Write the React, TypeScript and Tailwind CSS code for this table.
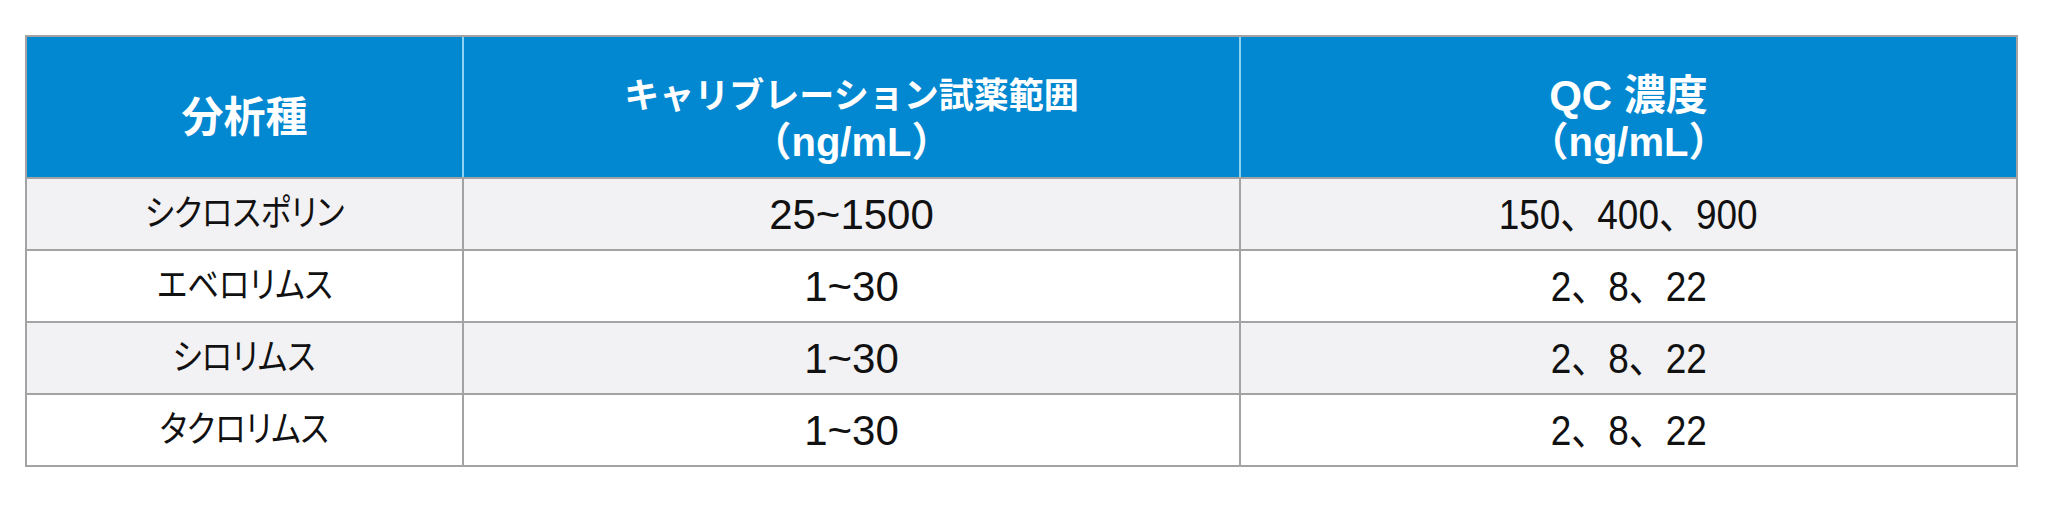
import React from 'react'

type Row = {
  name: string
  range: string
  qc: string
}

const rows: Row[] = [
  { name: 'シクロスポリン', range: '25~1500', qc: '150、400、900' },
  { name: 'エベロリムス', range: '1~30', qc: '2、8、22' },
  { name: 'シロリムス', range: '1~30', qc: '2、8、22' },
  { name: 'タクロリムス', range: '1~30', qc: '2、8、22' },
]

const font = "font-['Liberation_Sans','Noto_Sans_CJK_JP',sans-serif]"

const App = () => {
  return (
    <div className={`w-[2048px] h-[506px] bg-white pt-[35px] pl-[25px] ${font}`}>
      <div className="w-[1993px] border-2 border-[#a3a3a3]">
        {/* Header */}
        <div className="grid grid-cols-[437px_777px_1fr] h-[140px] bg-[#0288d1] text-white font-bold">
          <div className="flex items-center justify-center border-r-2 border-[#8fd3f2] text-[42px] pt-[20px]">
            分析種
          </div>
          <div className="flex flex-col items-center justify-center border-r-2 border-[#8fd3f2] leading-[47px] pt-[24px]">
            <span className="text-[35px]">キャリブレーション試薬範囲</span>
            <span className="text-[40px]">（ng/mL）</span>
          </div>
          <div className="flex flex-col items-center justify-center leading-[47px] pt-[24px]">
            <span className="text-[42px]">QC 濃度</span>
            <span className="text-[40px]">（ng/mL）</span>
          </div>
        </div>

        {/* Body */}
        {rows.map((row, i) => (
          <div
            key={row.name}
            className={`grid grid-cols-[437px_777px_1fr] h-[72px] border-t-2 border-[#a3a3a3] text-[#111111] ${
              i % 2 === 0 ? 'bg-[#f2f2f4]' : 'bg-white'
            }`}
          >
            <div className="flex items-center justify-center border-r-2 border-[#a3a3a3]">
              <span className="inline-block text-[36px] [font-feature-settings:'palt'] scale-x-[0.87]">
                {row.name}
              </span>
            </div>
            <div className="flex items-center justify-center border-r-2 border-[#a3a3a3] text-[42px]">
              {row.range}
            </div>
            <div className="flex items-center justify-center">
              <span className="inline-block text-[42px] scale-x-[0.88]">{row.qc}</span>
            </div>
          </div>
        ))}
      </div>
    </div>
  )
}

export default App
